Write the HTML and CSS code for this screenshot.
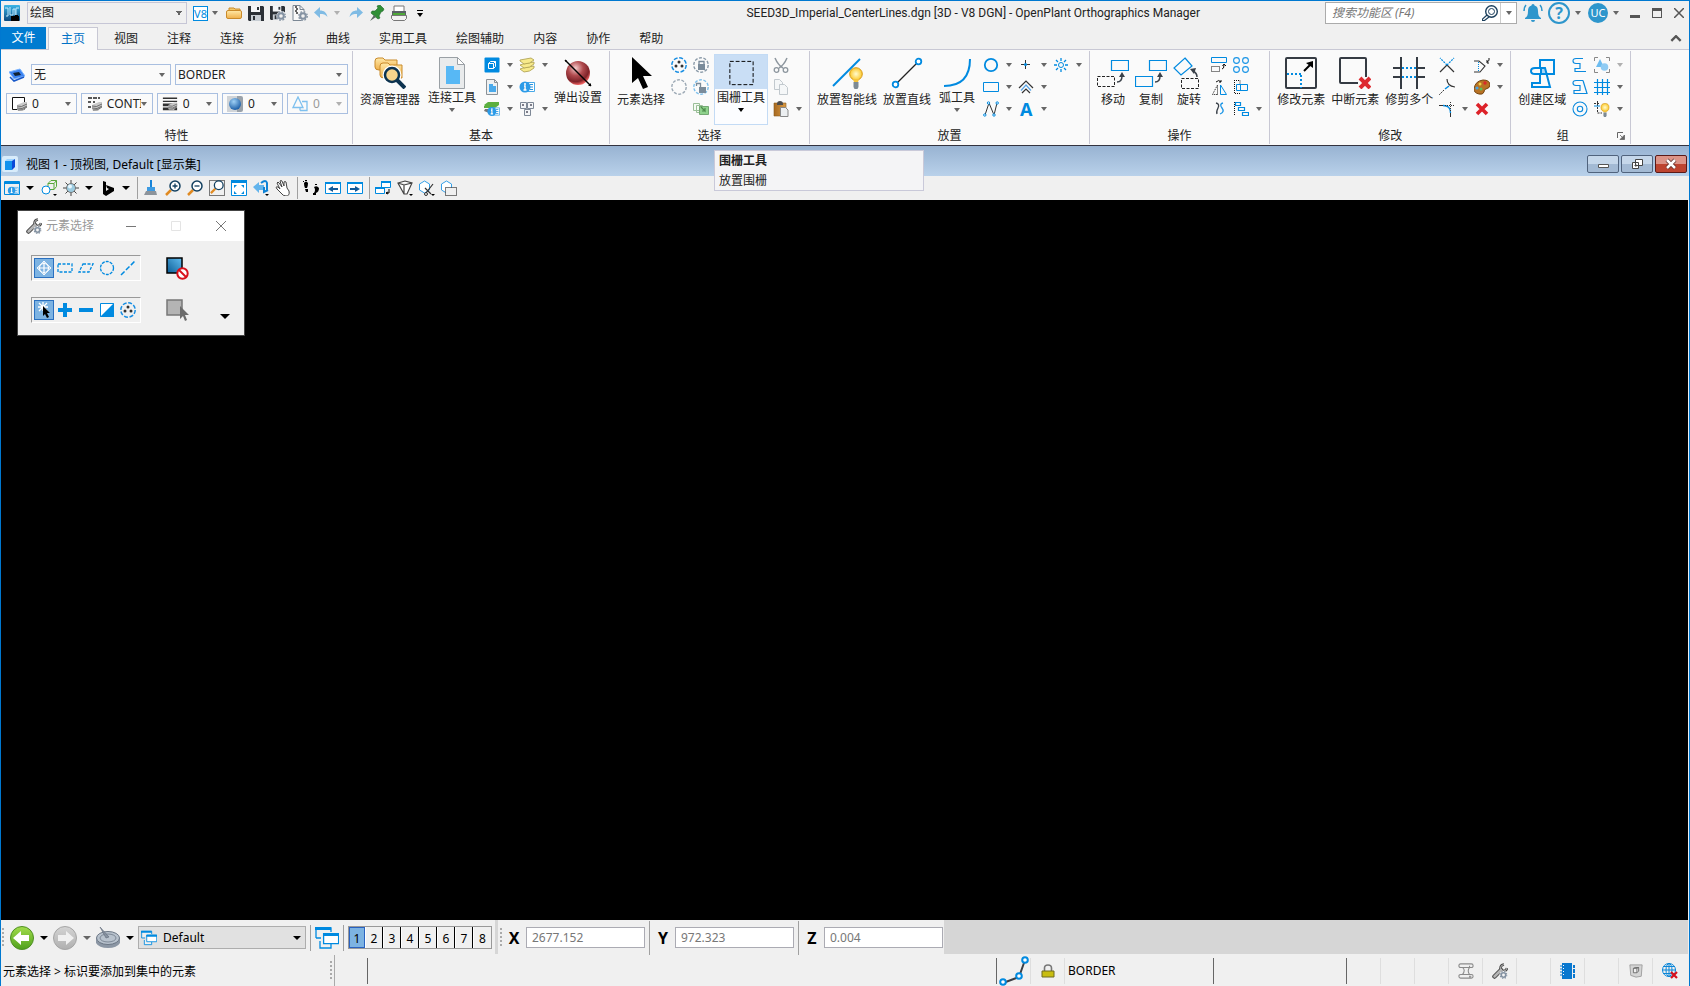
FILE: index.html
```html
<!DOCTYPE html>
<html lang="zh-CN">
<head>
    <meta charset="utf-8">
    <title>OpenPlant Orthographics Manager</title>
    <link rel="stylesheet" href="styles.css">
</head>
<body>
    <!-- icon sprite -->
    <svg class="sprite">
        <defs>
            <linearGradient id="gFolder" x1="0" y1="0" x2="0" y2="1"><stop offset="0" stop-color="#ffe9a8"/><stop offset="1" stop-color="#f0b04a"/></linearGradient>
            <linearGradient id="gGreen" x1="0" y1="0" x2="0" y2="1"><stop offset="0" stop-color="#a2dd4c"/><stop offset="1" stop-color="#4fa01c"/></linearGradient>
            <linearGradient id="gGrey" x1="0" y1="0" x2="0" y2="1"><stop offset="0" stop-color="#d4d4d4"/><stop offset="1" stop-color="#b0b0b0"/></linearGradient>
            <linearGradient id="gApp" x1="0" y1="0" x2="0" y2="1"><stop offset="0" stop-color="#3ab5e6"/><stop offset="1" stop-color="#0b4a80"/></linearGradient>
            <linearGradient id="gSquare" x1="0" y1="1" x2="1" y2="0"><stop offset="0" stop-color="#0a5c94"/><stop offset="1" stop-color="#62bdf0"/></linearGradient>
            <radialGradient id="gRed" cx=".4" cy=".3" r=".7"><stop offset="0" stop-color="#f6cccc"/><stop offset=".45" stop-color="#b04a4e"/><stop offset=".8" stop-color="#7e2329"/><stop offset="1" stop-color="#f06060"/></radialGradient>
            <radialGradient id="gBlue" cx=".4" cy=".3" r=".7"><stop offset="0" stop-color="#9fd0f5"/><stop offset="1" stop-color="#1d5fa8"/></radialGradient>
            <radialGradient id="gBulb"><stop offset="0" stop-color="#fffbd0"/><stop offset="1" stop-color="#fcc92c"/></radialGradient>
            <linearGradient id="gCopper" x1="0" y1="0" x2="1" y2="0"><stop offset="0" stop-color="#a86a20"/><stop offset="1" stop-color="#d99a45"/></linearGradient>
        </defs>
        <symbol id="app" viewBox="0 0 16 16"><rect width="16" height="16" rx="1" fill="url(#gApp)"/><path d="M1 3h3v8H2M6 2v8h3V4h2v6M12 10V3h3" fill="none" stroke="#bfeaff"/><rect x="7" y="11" width="8" height="5" fill="#000"/><path d="M11 10h3v2h-3z" fill="#000"/></symbol>
        <symbol id="folder" viewBox="0 0 16 16"><path d="M3 5V3h5l1 1h5v3" fill="#f4c869" stroke="#c98a2b"/><rect x=".5" y="5.500" width="15" height="8" rx="1.500" fill="url(#gFolder)" stroke="#c98a2b"/></symbol>
        <symbol id="save" viewBox="0 0 16 16"><path d="M0 1h15l1 1v14H1l-1-1z" fill="#2b3036"/><path d="M3 1h9v6H3z" fill="#f4f6f8"/><path d="M9 2h2v3H9z" fill="#2b3036"/><path d="M3 10h10v6H3z" fill="#c8ced4"/><path d="M5 11h2v4H5z" fill="#2b3036"/></symbol>
        <symbol id="gear" viewBox="0 0 10 10"><circle cx="5" cy="5" r="2.800" fill="none" stroke="#8492a2" stroke-width="2"/><circle cx="5" cy="5" r="4.300" fill="none" stroke="#8492a2" stroke-width="1.300" stroke-dasharray="1.700 1.700"/></symbol>
        <symbol id="savegear" viewBox="0 0 16 16"><use href="#save" width="15" height="15"/><circle cx="11.500" cy="11" r="5" fill="#f0f0f0"/><use href="#gear" x="6" y="6" width="10" height="10"/></symbol>
        <symbol id="pagegear" viewBox="0 0 16 16"><path d="M1 .5h7l4 4v11H1z" fill="#f8f8f8" stroke="#7b8794"/><path d="M8 .5v4h4" fill="none" stroke="#7b8794"/><path d="M4 1v2m1 0v2M4 5v2m1 0v2" stroke="#333" stroke-width="1.500"/><circle cx="11.500" cy="11" r="5" fill="#f0f0f0"/><use href="#gear" x="6" y="6" width="10" height="10"/></symbol>
        <symbol id="undo" viewBox="0 0 14 14"><path d="M0 6.500 6 1v3.500c4 0 6.500 2 7.500 6.500-2-2.500-4-3-7.500-3V12z" fill="#7fbbe4"/></symbol>
        <symbol id="redo" viewBox="0 0 14 14"><path d="M14 6.500 8 1v3.500C4 4.500 1.500 6.500.5 11c2-2.500 4-3 7.500-3V12z" fill="#7fbbe4"/></symbol>
        <symbol id="pin" viewBox="0 0 16 16"><path d="m8 1 3-1 4 4-1 2-2 1-2 4 1 2-2 1-7-6 1-2 3 0 3-3z" fill="#2f8f35" stroke="#1d6426" stroke-width=".6"/><path d="M5 10 1 16l6-4z" fill="#5a6a60"/></symbol>
        <symbol id="print" viewBox="0 0 16 16"><path d="M3 7V1h10v6" fill="#fff" stroke="#777"/><path d="M1 6h14v5H1z" fill="#596066"/><path d="M2 8h12v3H2z" fill="#4ea838"/><path d="M.5 10.500h15v3l-2 2h-11l-2-2z" fill="#f2f2f2" stroke="#777"/></symbol>
        <symbol id="searcher" viewBox="0 0 16 16"><g fill="none" stroke="#1c3f5c"><circle cx="9.500" cy="6.500" r="5.800" stroke-width="1.400"/><circle cx="9.500" cy="6.500" r="3"/><path d="m5 10-4.500 4v1.500h2L7 12" stroke-width="1.200"/></g></symbol>
        <symbol id="bell" viewBox="0 0 20 20"><path d="M10 1c1 0 1.500 1 1.500 1.500C14 3 15 5 15 8c0 4 1 6 3 7v1H2v-1c2-1 3-3 3-7 0-3 1-5 3.500-5.500C8.500 2 9 1 10 1zM8 17h4q0 2-2 2t-2-2z" fill="#2e96cc"/><path d="M3 2Q1 4 1 8M17 2q2 2 2 6" fill="none" stroke="#2e96cc" stroke-width="1.600"/></symbol>
        <symbol id="layer" viewBox="0 0 16 16"><path d="m0 5 11-3 5 7-11 3z" fill="#3b82f0" stroke="#7ab4ff"/><path d="m4 6 6-1 2 3-6 1z" fill="#123"/><path d="m1 10 4 4 10-4" fill="none" stroke="#1757c8" stroke-width="1.500"/></symbol>
        <symbol id="stackpg" viewBox="0 0 10 9"><path d="M0 3 7 0h3v5L6 9H1L0 7z" fill="#c9c9c9"/><path d="M0 4q4 2 10-2M0 6q5 2 10-2M1 8q4 1 9-3" fill="none" stroke="#555" stroke-width=".8"/></symbol>
        <symbol id="pcolor" viewBox="0 0 16 16"><path d="M1.500 1.500h12v12h-12z" fill="#fff" stroke="#111"/><use href="#stackpg" x="6" y="6" width="10" height="9"/></symbol>
        <symbol id="pstyle" viewBox="0 0 16 16"><path d="M2 2h12M2 6h3m2 0h2M2 11h3" stroke="#222" stroke-width="1.300" stroke-dasharray="4 1"/><use href="#stackpg" x="6" y="6" width="10" height="9"/></symbol>
        <symbol id="pweight" viewBox="0 0 18 16"><path d="M1 1.500h16M1 5h16" stroke="#333" stroke-width="1.500"/><path d="M1 9h16M1 13.500h16" stroke="#333" stroke-width="3"/><use href="#stackpg" x="7" y="6" width="10" height="9"/></symbol>
        <symbol id="pglobe" viewBox="0 0 16 16"><rect width="16" height="16" rx="2" fill="#9aa2aa"/><path d="M0 0h10v16H0z" fill="#d0d4d8"/><circle cx="8" cy="8" r="6" fill="url(#gBlue)"/></symbol>
        <symbol id="pprio" viewBox="0 0 16 16"><path d="M1 11.500 6 1l5 10.500zM8 14.500h7v-9h-5M8 14.500V12" fill="none" stroke="#7ec0ee" stroke-width="1.300"/></symbol>

        <symbol id="explorer" viewBox="0 0 32 32"><g fill="url(#gFolder)" stroke="#c98a2b"><path d="M1 4q0-3 3-3h5l2 2h12v10H5Q1 13 1 10z"/><path d="M6 9q0-3 3-3h5l2 2h12v13H10q-4 0-4-3z"/></g><circle cx="18" cy="18" r="7" fill="#f9d98c" stroke="#fff" stroke-width="5"/><circle cx="18" cy="18" r="7" fill="#f9d48c" stroke="#0d3350" stroke-width="2.500"/><path d="m23 23 8 8" stroke="#0d3350" stroke-width="4"/></symbol>
        <symbol id="doc" viewBox="0 0 32 32"><path d="M3.500.5h18l7 7v24h-25z" fill="#e9ebec" stroke="#9aa0a5"/><path d="M21.500.5v7h7z" fill="#fff" stroke="#9aa0a5"/><path d="M10 9h8v4h6v14H10z" fill="#57b8f5"/></symbol>
        <symbol id="docsmall" viewBox="0 0 16 16"><path d="M2.500.5h8l3 3v12h-11z" fill="#eef0f1" stroke="#8a9197"/><path d="M10.500.5v3h3" fill="none" stroke="#8a9197"/><path d="M5 5h4v2h3v6H5z" fill="#4aa9ea"/></symbol>
        <symbol id="ball" viewBox="0 0 32 32"><circle cx="16" cy="16" r="12" fill="url(#gRed)"/><path d="m3 3 26 26" stroke="#000" stroke-width="1.400"/><path d="m3 3 2 0-2 2zM29 29h-3l3-3z"/></symbol>
        <symbol id="cubebox" viewBox="0 0 16 16"><rect x=".5" y=".5" width="15" height="15" rx="1" fill="#008ae0"/><path d="M4.500 6.500h5v5h-5zM4.500 6.500l2-2h5v5l-2 2M9.500 6.500l2-2" fill="none" stroke="#fff"/></symbol>
        <symbol id="info" viewBox="0 0 16 16"><path d="M7 3.500h8.500v9H7" fill="#fff" stroke="#49a9e8"/><path d="M11 5.500h3M11 8h3M11 10.500h3" stroke="#2a93dd"/><circle cx="6" cy="8" r="5.500" fill="#2b9be8"/><path d="M6 4v2m-1 1h1v4m-1.500 0h3" stroke="#fff" stroke-width="1.500"/></symbol>
        <symbol id="landinfo" viewBox="0 0 16 16"><path d="m0 4 4-3h11l-4 4H1zM0 7v-2h11l4-4v3l-4 3z" fill="#5caf3f"/><path d="m0 10 1-2h4v4z" fill="#777"/><use href="#info" x="3" y="4" width="13" height="13"/></symbol>
        <symbol id="layers" viewBox="0 0 16 16"><g fill="#f7ea8b" stroke="#a99c4c" stroke-width=".8"><path d="m1 12 4 3q6 0 10-4V9L4 11z"/><path d="m1 8 4 3q6 0 10-4V5L4 7z"/><path d="m1 4 4 3q6 0 10-4l-3-2-11 2z"/></g></symbol>
        <symbol id="keys" viewBox="0 0 16 16"><g fill="#f4f5f7" stroke="#7e8896"><path d="M1.500 1.500h6v6h-6zM8.500 1.500h6v6h-6zM5.500 8.500h6v6h-6z"/></g><path d="M3 4h2m6 0h2m-6 7h2" stroke="#556" stroke-width="1.500"/></symbol>

        <symbol id="cursor" viewBox="0 0 32 32"><path d="M7 0v26l6-5 5 11 5-2-5-11h9z"/></symbol>
        <symbol id="dots" viewBox="0 0 16 16"><circle cx="8" cy="8" r="7.200" fill="none" stroke="#1a8fe3" stroke-width="1.500" stroke-dasharray="4 1.650"/><circle cx="8" cy="5" r="1.500" fill="#333"/><circle cx="5" cy="9" r="1.500" fill="#333"/><circle cx="11" cy="9" r="1.500" fill="#333"/></symbol>
        <symbol id="dotcircle" viewBox="0 0 16 16"><circle cx="8" cy="8" r="7.200" fill="none" stroke="#9ba8b4" stroke-width="1.400" stroke-dasharray="3 1.520"/></symbol>
        <symbol id="locksel" viewBox="0 0 16 16"><circle cx="8" cy="8" r="7.200" fill="none" stroke="#8a9aa8" stroke-width="1.400" stroke-dasharray="3 1.520"/><path d="M5 7h7v6H5z" fill="#7a8b9a"/><path d="M6 7V4.500h5V7" fill="none" stroke="#7a8b9a" stroke-width="1.300"/></symbol>
        <symbol id="unlocksel" viewBox="0 0 16 16"><circle cx="8" cy="8" r="7.200" fill="none" stroke="#7fc0ec" stroke-width="1.400" stroke-dasharray="3 1.520"/><path d="M6 8h7v6H6z" fill="#7a8b9a"/><path d="M3.500 7V4.500h4V8" fill="none" stroke="#7a8b9a" stroke-width="1.300"/></symbol>
        <symbol id="sheets" viewBox="0 0 16 16"><path d="M.5 2.500h6v7h-6zM3.500 4.500h6v7h-6z" fill="#f4faf2" stroke="#9bbf98"/><path d="M6.500 5.500h9v8h-9z" fill="#8fd28c" stroke="#74a873"/><path d="m8 6 4 4V7m0 3H9" fill="none" stroke="#4d8a4b" stroke-width="1.200"/></symbol>
        <symbol id="fence" viewBox="0 0 32 32"><path d="M4.500 3.500h24v24h-24z" fill="none" stroke="#000" stroke-dasharray="4 2"/></symbol>
        <symbol id="cut" viewBox="0 0 16 16"><path d="M2 1q3 7 8 10M14 1q-3 7-8 10" fill="none" stroke="#8d969e" stroke-width="1.500"/><circle cx="3.500" cy="13" r="2.300" fill="none" stroke="#8d969e" stroke-width="1.300"/><circle cx="12.500" cy="13" r="2.300" fill="none" stroke="#8d969e" stroke-width="1.300"/></symbol>
        <symbol id="copypg" viewBox="0 0 16 16"><g fill="#f5f7f8" stroke="#c2c9ce"><path d="M1.500.5h5l3 3v7h-8z"/><path d="M6.500 5.500h5l3 3v7h-8z"/></g></symbol>
        <symbol id="paste" viewBox="0 0 16 16"><path d="M1 2h12v13H1z" fill="url(#gCopper)" stroke="#8a5a1c" stroke-width=".6"/><path d="M4 3q0-3 3-3t3 3v1H4z" fill="#4c4c4c"/><path d="M7.500 6.500h5l2.500 2.500v6.500H7.500z" fill="#eceff1" stroke="#888"/></symbol>

        <symbol id="bulb" viewBox="0 0 14 22"><circle cx="7" cy="7" r="6.300" fill="url(#gBulb)" stroke="#d79b1c"/><path d="M4 12h6l-1 3H5z" fill="#f5c33c"/><path d="M4.500 15h5v5l-1 2h-3l-1-2z" fill="#7d8a94"/></symbol>
        <symbol id="smartline" viewBox="0 0 32 32"><path d="M2 29 29 2" stroke="#008ae0" stroke-width="2"/><use href="#bulb" x="18" y="10" width="14" height="22"/></symbol>
        <symbol id="line" viewBox="0 0 32 32"><path d="M5 27 27 5" stroke="#222" stroke-width="1.200"/><circle cx="4.500" cy="27.500" r="2.800" fill="#fff" stroke="#008ae0" stroke-width="1.800"/><circle cx="27.500" cy="4.500" r="2.800" fill="#fff" stroke="#008ae0" stroke-width="1.800"/></symbol>
        <symbol id="arc" viewBox="0 0 32 32"><path d="M29 2q0 27-26 27" fill="none" stroke="#008ae0" stroke-width="2"/></symbol>
        <symbol id="circle" viewBox="0 0 16 16"><circle cx="8" cy="8" r="6.200" fill="none" stroke="#008ae0" stroke-width="1.800"/></symbol>
        <symbol id="rect" viewBox="0 0 16 16"><path d="M.5 3.500h15v9H.5z" fill="none" stroke="#008ae0"/></symbol>
        <symbol id="poly" viewBox="0 0 16 16"><path d="m2 14 4-12 5 12 3-12" fill="none" stroke="#333"/><g fill="#fff" stroke="#008ae0"><circle cx="1.800" cy="14" r="1.200"/><circle cx="5.500" cy="2" r="1.200"/><circle cx="11" cy="14" r="1.200"/><circle cx="14.200" cy="2" r="1.200"/></g></symbol>
        <symbol id="point" viewBox="0 0 16 16"><path d="M7.500 3v9M3 7.500h9" stroke="#333"/><circle cx="7.500" cy="7.500" r="1.500" fill="#008ae0"/></symbol>
        <symbol id="roof" viewBox="0 0 16 16"><path d="m1 9 7-7 7 7M4 14l4-4 4 4" fill="none" stroke="#333" stroke-width="1.200"/><path d="m3 11.500 5-5.500 5 5.500" fill="none" stroke="#5aa5e6" stroke-width="1.200"/></symbol>
        <symbol id="star" viewBox="0 0 16 16"><circle cx="8" cy="8" r="2.500" fill="none" stroke="#008ae0"/><path d="M8 1v3m0 8v3M1 8h3m8 0h3M3 3l2 2m6 6 2 2M3 13l2-2m6-6 2-2" stroke="#008ae0" stroke-width="1.300"/></symbol>

        <symbol id="move" viewBox="0 0 32 32"><path d="M14.500 3.500h17v10h-17z" fill="none" stroke="#008ae0" stroke-width="1.200"/><path d="M.5 19.500h17v10H.5z" fill="none" stroke="#222" stroke-dasharray="3 1.500"/><path d="M20 25q5 0 5-6" fill="none" stroke="#3a4149" stroke-width="1.500"/><path d="m25 15 3 5h-6z" fill="#3a4149"/></symbol>
        <symbol id="copy" viewBox="0 0 32 32"><path d="M14.500 3.500h17v10h-17zM.5 19.500h17v10H.5z" fill="none" stroke="#008ae0" stroke-width="1.200"/><path d="M20 25q5 0 5-6" fill="none" stroke="#3a4149" stroke-width="1.500"/><path d="m25 15 3 5h-6z" fill="#3a4149"/></symbol>
        <symbol id="rotate" viewBox="0 0 32 32"><path d="M12 1 19 9 8 18 1 11z" fill="none" stroke="#008ae0" stroke-width="1.200"/><path d="M8.500 21.500h17v10h-17z" fill="none" stroke="#222" stroke-dasharray="3 1.500"/><path d="M24 20q0-4-4-6" fill="none" stroke="#3a4149" stroke-width="1.500"/><path d="m17 12 6-1-2 6z" fill="#3a4149"/></symbol>
        <symbol id="stretch" viewBox="0 0 16 16"><path d="M.5.5h15v5H.5z" fill="none" stroke="#008ae0"/><path d="M.5 9.500h8v5h-8z" fill="none" stroke="#111" stroke-dasharray="1 1"/><path d="M11 12q2 0 2-4m-1.500 1L13 7l2 2" fill="none" stroke="#111"/></symbol>
        <symbol id="array" viewBox="0 0 16 16"><g fill="none" stroke="#1a95e6" stroke-width="1.100"><circle cx="3.500" cy="3.500" r="2.900"/><circle cx="12.500" cy="3.500" r="2.900"/><circle cx="3.500" cy="12.500" r="2.900"/><circle cx="12.500" cy="12.500" r="2.900"/></g></symbol>
        <symbol id="mirror" viewBox="0 0 16 16"><path d="M6.500 15.500V6l-5 9.500z" fill="none" stroke="#111" stroke-dasharray="1 1"/><path d="M9.500 15.500V6l6 9.500z" fill="none" stroke="#008ae0"/><path d="M5 3q3-3 5 0m0-2v2H8" fill="none" stroke="#111"/></symbol>
        <symbol id="offset" viewBox="0 0 16 16"><path d="M1.500 1v14M1 1.500h6v3M7 14.500H1" fill="none" stroke="#111" stroke-dasharray="1 1"/><path d="M3.500 5.500h11v6h-11z" fill="none" stroke="#008ae0"/><path d="M7.500 5v7" stroke="#008ae0"/></symbol>
        <symbol id="curves" viewBox="0 0 16 16"><path d="M5 2q4 1 2 5t-1 6" fill="none" stroke="#3a4149" stroke-width="1.300"/><path d="M12 2q-4 1-1 5t-2 6" fill="none" stroke="#1a95e6" stroke-width="1.300"/></symbol>
        <symbol id="align" viewBox="0 0 16 16"><path d="M1.500 1v14" stroke="#111" stroke-dasharray="1 1"/><path d="M2.500 1.500h5v3h-5zM5.500 6.500h6v3h-6zM9.500 11.500h6v3h-6z" fill="none" stroke="#008ae0" stroke-width="1.200"/></symbol>

        <symbol id="modify" viewBox="0 0 32 32"><rect x="1" y="1" width="30" height="30" rx="1" fill="none" stroke="#353b43" stroke-width="2"/><path d="M2 17h14M16 18v13" stroke="#008ae0" stroke-width="2" stroke-dasharray="2 2"/><path d="m19 14 6-6" stroke="#000" stroke-width="2"/><path d="M28 4v7l-7-5z"/></symbol>
        <symbol id="break" viewBox="0 0 32 32"><path d="M27 20V2q0-1-1-1H2Q1 1 1 2v23q0 1 1 1h17" fill="none" stroke="#353b43" stroke-width="2"/><path d="m21 21 10 10m0-10L21 31" stroke="#dd2b31" stroke-width="4"/></symbol>
        <symbol id="trim" viewBox="0 0 32 32"><path d="M8 0v32M24 0v32M0 11h8m16 0h8M0 20h8m16 0h8" stroke="#353b43" stroke-width="2"/><path d="M9 11h14M9 20h14" stroke="#008ae0" stroke-width="2" stroke-dasharray="2 2"/></symbol>
        <symbol id="xcut" viewBox="0 0 16 16"><path d="m8 8 7 7M8 8l-7 7" stroke="#333" stroke-width="1.200"/><path d="M8 8 1 1m7 7 7-7" stroke="#008ae0" stroke-width="1.200" stroke-dasharray="2 1"/></symbol>
        <symbol id="extend" viewBox="0 0 16 16"><path d="M8 0q0 7 8 8" fill="none" stroke="#333" stroke-width="1.200"/><path d="m10 7-4 3" stroke="#008ae0" stroke-width="1.500"/><path d="m5 11-5 5" stroke="#333" stroke-dasharray="2 1"/></symbol>
        <symbol id="fillet" viewBox="0 0 16 16"><path d="M0 4.500h4M11.500 12v4" stroke="#333"/><path d="M4 4.500q7.500 0 7.500 7.500" fill="none" stroke="#008ae0" stroke-width="1.400"/><path d="M6 4.500h10M11.500 1v9" stroke="#333" stroke-dasharray="1 1"/></symbol>
        <symbol id="arcmod" viewBox="0 0 16 16"><path d="M0 4h5l6 5-5 6H0" fill="none" stroke="#333" stroke-width="1.100"/><path d="M4.500 5v9" stroke="#008ae0" stroke-dasharray="1 1"/><path d="M13 5q3-1 2-4m-2 2 0 3 2 0" fill="none" stroke="#111"/></symbol>
        <symbol id="palette" viewBox="0 0 16 16"><path d="M9 1q7 0 7 5 0 3-4 4-2 0-2 3-1 3-5 2-5-1-5-5 1-8 9-9z" fill="#b87224" stroke="#754510"/><circle cx="11" cy="4" r="1.700" fill="#d92a2a"/><circle cx="6" cy="5" r="1.500" fill="#efcf43"/><circle cx="3" cy="9" r="1.600" fill="#48a5e4"/><circle cx="7" cy="10" r="1.500" fill="#5ec05a"/></symbol>
        <symbol id="redx" viewBox="0 0 16 16"><path d="m3 3 10 10m0-10L3 13" stroke="#dd2229" stroke-width="3.600"/></symbol>
        <symbol id="region" viewBox="0 0 32 32"><path d="M14 11h4l4 6h-7z" fill="#a8d5f4"/><path d="M14 10V3h14v14H15V11M18 11H9q-4 0-4 3t4 3h5v9H6v4h18l-5-19z" fill="none" stroke="#008ae0" stroke-width="2"/></symbol>
        <symbol id="shape1" viewBox="0 0 16 16"><path d="M11 1.500H4q-3 0-3 2.500t3 2.500h4v5H3v3h11" fill="none" stroke="#0b8ade" stroke-width="1.200"/></symbol>
        <symbol id="shape2" viewBox="0 0 16 16"><path d="M11 1.500H4q-3 0-3 2.500t3 2.500h4v5H2v3h13l-4-13" fill="none" stroke="#0b8ade" stroke-width="1.200"/></symbol>
        <symbol id="ring" viewBox="0 0 16 16"><g fill="none" stroke="#0b8ade" stroke-width="1.100"><circle cx="8" cy="8" r="7"/><circle cx="8" cy="8" r="2.700"/></g></symbol>
        <symbol id="group" viewBox="0 0 16 16"><path d="M.5 4V.5H4m8 0h3.500V4m0 8v3.500H12m-8 0H.5V12" fill="none" stroke="#888"/><path d="m6 2 4 8H2z" fill="#6cbcf0"/><circle cx="10.500" cy="10" r="3.800" fill="#8fcbf3"/></symbol>
        <symbol id="grid" viewBox="0 0 16 16"><path d="M3.500 0v16M8.500 0v16M13.500 0v16M0 3.500h16M0 8.500h16M0 13.500h16" stroke="#008ae0" stroke-width="1.200"/></symbol>
        <symbol id="gbulb" viewBox="0 0 16 16"><path d="M0 2.500h5M3.500 0v12H8" fill="none" stroke="#333" stroke-dasharray="2 1"/><path d="M0 5h6" stroke="#008ae0"/><use href="#bulb" x="6" y="2" width="10" height="14"/></symbol>

        <symbol id="vcube" viewBox="0 0 16 16"><rect width="16" height="16" rx="2" fill="#d8ecfb"/><path d="m3 5 2-2h8l-2 2z" fill="#9ed4ff"/><path d="M3 5h7v9H3z" fill="#1292ee"/><path d="m10 5 3-2v8l-3 3z" fill="#0b49d8"/></symbol>
        <symbol id="vinfo" viewBox="0 0 16 16"><path d="M1 2h14v2H1z" fill="#008ae0"/><path d="M.5 1.500h15v13H.5z" fill="none" stroke="#008ae0"/><use href="#info" x="3" y="5" width="12" height="11"/></symbol>
        <symbol id="vstyle" viewBox="0 0 16 16"><path d="M7 3.500h6v6H7zM7 3.500l3-3h5.500v6l-2.500 3M13 3.500l2.500-3" fill="none" stroke="#58a83a"/><circle cx="5" cy="10" r="4" fill="#fff" stroke="#008ae0"/><path d="M12 14h4l-2 2z"/></symbol>
        <symbol id="sun" viewBox="0 0 16 16"><path d="M8 0v16M0 8h16M2.500 2.500l11 11m0-11-11 11" stroke="#444"/><circle cx="8" cy="8" r="4.500" fill="#9ccbe0" stroke="#777"/><circle cx="7" cy="6.500" r="2" fill="#e8f8ff"/></symbol>
        <symbol id="bing" viewBox="0 0 16 16"><path d="m3 1 3 1v9l3-2-2-1-1-3 8 3v3l-8 5-3-2z"/></symbol>
        <symbol id="brush" viewBox="0 0 16 16"><path d="M7 0h2v7H7z" fill="#1683d8"/><path d="M4 7h8v4H4z" fill="#3e9be2"/><path d="M3 11h10l1 4H1z" fill="#8d949b"/></symbol>
        <symbol id="lens" viewBox="0 0 16 16"><path d="m6 10-5 5" stroke="#e08a22" stroke-width="2.500"/><circle cx="10" cy="6" r="5" fill="#fff" stroke="#134060" stroke-width="1.500"/></symbol>
        <symbol id="zin" viewBox="0 0 16 16"><use href="#lens"/><path d="M7.500 6h5M10 3.500v5" stroke="#134060" stroke-width="1.300"/></symbol>
        <symbol id="zout" viewBox="0 0 16 16"><use href="#lens"/><path d="M7.500 6h5" stroke="#134060" stroke-width="1.300"/></symbol>
        <symbol id="zwin" viewBox="0 0 16 16"><path d="M.5.5h15v15H.5z" fill="none" stroke="#000" stroke-dasharray="1 1"/><use href="#lens" x="1" y="0" width="14" height="14"/></symbol>
        <symbol id="fit" viewBox="0 0 16 16"><path d="M.5.500h15v15H.5z" fill="#fff" stroke="#008ae0"/><path d="M0 0h16v3H0zM3 5h3L3 8zm10 0h-3l3 3zM3 14h3l-3-3zm10 0h-3l3-3z" fill="#008ae0"/></symbol>
        <symbol id="vrot" viewBox="0 0 16 16"><path d="M0 7 6 2v3h5v5H6v3z" fill="#62b4ec"/><path d="M8 3q5-4 6 0v7m-3-3v5l4-2" fill="none" stroke="#0f83d6" stroke-width="2"/><path d="M12 14h4l-2 2z"/></symbol>
        <symbol id="hand" viewBox="0 0 16 16"><path d="M6 13 2 9Q0 6 3 7l2 2-3-6q1-2 2 0l3 4-2-6q1-1 2 0l2 5 0-4q1-1 2 0l1 6 2 3q1 5-3 5-3 0-5-3z" fill="#fff" stroke="#444"/></symbol>
        <symbol id="feet" viewBox="0 0 16 16"><path d="M1 3q2-3 4 0 0 3-1 5H2Q1 6 1 3zM2 9h3v3H3zM11 7q3-2 5 1 0 4-3 5h-2q2-3 0-6zM10 13h3v2h-3z"/><path d="M0 1h1v1H0zm2-1h2v1H2zM12 4h2v1h-2z"/></symbol>
        <symbol id="vprev" viewBox="0 0 16 16"><path d="M.5 2.500h15v11H.5z" fill="#fff" stroke="#008ae0"/><path d="M0 2h16v2H0z" fill="#008ae0"/><path d="M6 9h7" stroke="#135a98" stroke-width="2"/><path d="m3 9 5-3v6z" fill="#135a98"/></symbol>
        <symbol id="vnext" viewBox="0 0 16 16"><path d="M.5 2.500h15v11H.5z" fill="#fff" stroke="#008ae0"/><path d="M0 2h16v2H0z" fill="#008ae0"/><path d="M3 9h7" stroke="#135a98" stroke-width="2"/><path d="m13 9-5-3v6z" fill="#135a98"/></symbol>
        <symbol id="vcopy" viewBox="0 0 16 16"><path d="M6.500 1.500h9v6h-9zM.5 7.500h9v6h-9z" fill="#fff" stroke="#008ae0"/><path d="M6 1h10v2H6zM0 7h10v2H0z" fill="#008ae0"/><path d="M11 13h3V9m-3 4 2-1m-2 1 2 1" fill="none" stroke="#000"/></symbol>
        <symbol id="vpersp" viewBox="0 0 16 16"><path d="m1 3 7-2 7 2-5 11H7zM1 3l6 2 8-2M7 5v9" fill="#fff" stroke="#444" stroke-width="1.200"/><path d="M12 14h4l-2 2z"/></symbol>
        <symbol id="vclip" viewBox="0 0 16 16"><path d="m.5 4 5-3 5 3v6l-5 3-5-3z" fill="#fff" stroke="#35a0e8"/><path d="m6 8 6 6m2-10L7 13" stroke="#333" stroke-width="1.200"/><circle cx="7" cy="14" r="1.500" fill="none" stroke="#333"/><path d="M12 14h4l-2 2z"/></symbol>
        <symbol id="vmask" viewBox="0 0 16 16"><path d="m.5 4 5-3 5 3v6l-5 3-5-3z" fill="#fff" stroke="#35a0e8"/><path d="M4.500 7.500h11v8h-11z" fill="#f0f0f0" stroke="#000" stroke-dasharray="1 1"/></symbol>

        <symbol id="wrench" viewBox="0 0 16 16"><g fill="none" stroke="#444"><path d="M2.500 13.500 9 7" stroke-width="4.500" stroke-linecap="round"/><path d="M12 1.500Q8.500 2 8.500 5t3 3q3 0 3.500-3" stroke-width="2.500"/></g><g fill="none" stroke="#b5b5b5"><path d="M2.500 13.500 9 7" stroke-width="2.500" stroke-linecap="round"/><path d="M12 1.500Q8.500 2 8.500 5t3 3q3 0 3.500-3"/></g><circle cx="11.500" cy="12" r="4" fill="#f4f4f4"/><use href="#gear" x="7.500" y="8" width="8" height="8"/></symbol>
        <symbol id="seltarget" viewBox="0 0 16 16"><circle cx="8" cy="8" r="4.500" fill="none" stroke="#fff" stroke-width="1.200"/><path d="M8 1v14M1 8h14" stroke="#fff" stroke-width="1.200"/><path d="m8 1 7 7-7 7-7-7z" fill="none" stroke="#fff" stroke-width=".8"/></symbol>
        <symbol id="drect" viewBox="0 0 16 16"><path d="M1 4h14v8H1z" fill="none" stroke="#008ae0" stroke-width="1.300" stroke-dasharray="3 1.500"/></symbol>
        <symbol id="dpar" viewBox="0 0 16 16"><path d="M5 4h10l-4 8H1z" fill="none" stroke="#008ae0" stroke-width="1.300" stroke-dasharray="3 1.500"/></symbol>
        <symbol id="dcirc" viewBox="0 0 16 16"><circle cx="8" cy="8" r="6.500" fill="none" stroke="#008ae0" stroke-width="1.300" stroke-dasharray="3 1.080"/></symbol>
        <symbol id="dline" viewBox="0 0 16 16"><path d="M1 15 15 1" stroke="#008ae0" stroke-width="1.500" stroke-dasharray="5 2"/></symbol>
        <symbol id="newsel" viewBox="0 0 16 16"><path d="M7 0v9M2 5h10M3 1l8 8m0-8L3 9" stroke="#fff" stroke-width="1.300"/><path d="M7 4v10l2-2 2 4 2-1-2-4h3z"/></symbol>
        <symbol id="plus" viewBox="0 0 16 16"><path d="M8 1v14M1 8h14" stroke="#008ae0" stroke-width="4"/></symbol>
        <symbol id="minus" viewBox="0 0 16 16"><path d="M1 8h14" stroke="#008ae0" stroke-width="4"/></symbol>
        <symbol id="invert" viewBox="0 0 16 16"><path d="M1.500 1.500h13v13h-13z" fill="#fff" stroke="#008ae0"/><path d="M15 1v14H1z" fill="#008ae0"/></symbol>
        <symbol id="deselect" viewBox="0 0 24 24"><path d="M2 2h15v15H2z" fill="url(#gSquare)" stroke="#000" stroke-width="1.500"/><circle cx="17.500" cy="17.500" r="5.200" fill="#fff" stroke="#d8101c" stroke-width="2"/><path d="m14 14 7 7" stroke="#d8101c" stroke-width="2"/></symbol>
        <symbol id="selall" viewBox="0 0 24 24"><path d="M2 2h15v15H2z" fill="#b4b4b4" stroke="#777" stroke-width="1.500"/><path d="M15 8v13l3-3 2 5 2-1-2-5h4z" fill="#6c6c6c"/></symbol>

        <symbol id="back" viewBox="0 0 24 24"><circle cx="12" cy="12" r="11.500" fill="url(#gGreen)" stroke="#4f8f25"/><path d="m3 12 8-7v4h8v6h-8v4z" fill="#fff"/></symbol>
        <symbol id="fwd" viewBox="0 0 24 24"><circle cx="12" cy="12" r="11.500" fill="url(#gGrey)" stroke="#a5a5a5"/><path d="m21 12-8-7v4H5v6h8v4z" fill="#f0f0f0"/></symbol>
        <symbol id="compass" viewBox="0 0 24 24"><path d="M0 12v5q3 5 12 5t12-5v-5z" fill="#8b96a4"/><ellipse cx="12" cy="12" rx="11.500" ry="6.500" fill="#b8c2cd" stroke="#6c7785"/><ellipse cx="12" cy="12" rx="8" ry="4" fill="none" stroke="#7d8896"/><path d="m4 1 9 10-3 1z" fill="#8792a0" stroke="#5f6a78" stroke-width=".6"/></symbol>
        <symbol id="views" viewBox="0 0 24 22"><g fill="#f0f0f0" stroke="#008ae0" stroke-width="1.300"><path d="M5 14v7h11v-4M1 11V1h15v4M1 11h5"/><path d="M8.600 6.600h15v10h-15z" fill="#fff"/></g><path d="M0 0h16v3H0zM8 6h16v3H8z" fill="#008ae0"/></symbol>
        <symbol id="snap" viewBox="0 0 30 30"><path d="m4 27 16-6 6-17" fill="none" stroke="#3b3f45" stroke-width="2"/><g fill="#fff" stroke="#008ae0" stroke-width="2"><circle cx="4" cy="26" r="2.800"/><circle cx="20" cy="20" r="2.800"/><circle cx="26" cy="4" r="2.800"/></g></symbol>
        <symbol id="lock" viewBox="0 0 14 14"><path d="M3.500 7V4q0-3 3.500-3t3.500 3v3" fill="none" stroke="#777" stroke-width="1.600"/><path d="M1 7h12v6H1z" fill="#c8bd10" stroke="#6f6a20"/></symbol>
        <symbol id="scroll" viewBox="0 0 18 18"><g fill="none" stroke="#8a8a8a" stroke-width="1.200"><path d="M3 1h12q2 0 2 2t-2 2h-2M3 1Q1 1 1 3t2 2h10V3M5 5q4 3 0 8H3q-2 0-2 2t2 2h12M13 5q-3 4 0 8h2q2 0 2 2t-2 2-2-2h2M5 13h8"/></g></symbol>
        <symbol id="notebook" viewBox="0 0 16 16"><path d="M2 0h10v16H2z" fill="#0a78cf"/><path d="M0 3h4M0 6h4M0 9h4M0 12h4" stroke="#0a78cf"/><path d="M3 2h1v1H3zM3 5h1v1H3zM3 8h1v1H3zM3 11h1v1H3z" fill="#fff"/><path d="M13 2h2v3h-2zM13 6h2v4h-2zM13 11h2v4h-2z" fill="#0a78cf"/></symbol>
        <symbol id="shield" viewBox="0 0 16 16"><path d="M1 1h14l-1 13-6 1-6-2z" fill="#d5d5d5" stroke="#999"/><path d="M5 5h4v5H5zM5 5l2-1h4v4l-2 2M9 5l2-1" fill="#eee" stroke="#666"/></symbol>
        <symbol id="globe" viewBox="0 0 16 16"><g fill="none" stroke="#0a86d8"><circle cx="7" cy="7" r="6.500"/><ellipse cx="7" cy="7" rx="3" ry="6.500"/><path d="M7 0v14M0 7h14M1 3.500h12M1 10.500h12"/></g><path d="m9 9 6 6m0-6-6 6" stroke="#d8101c" stroke-width="2.200"/></symbol>
    </svg>

    <div class="window">
        <header class="titlebar">
            <svg class="i16"><use href="#app"/></svg>
            <select class="workflow" aria-label="工作流"><option>绘图</option></select>
            <div class="quick">
                <button class="v8" title="V8">V8</button><i class="tri"></i>
                <button title="打开"><svg class="i16"><use href="#folder"/></svg></button>
                <button title="保存"><svg class="i16"><use href="#save"/></svg></button>
                <button title="保存设置"><svg class="i16"><use href="#savegear"/></svg></button>
                <button title="压缩"><svg class="i16"><use href="#pagegear"/></svg></button>
                <button title="撤消"><svg class="i14"><use href="#undo"/></svg></button><i class="tri dim"></i>
                <button title="重做"><svg class="i14"><use href="#redo"/></svg></button>
                <button title="固定"><svg class="i16"><use href="#pin"/></svg></button>
                <button title="打印"><svg class="i16"><use href="#print"/></svg></button>
                <button class="custom" title="自定义"><i class="tri black"></i></button>
            </div>
            <h1 class="caption">SEED3D_Imperial_CenterLines.dgn [3D - V8 DGN] - OpenPlant Orthographics Manager</h1>
            <div class="search">
                <input type="text" placeholder="搜索功能区 (F4)" aria-label="搜索功能区">
                <svg class="i16"><use href="#searcher"/></svg>
                <button title="搜索选项"><i class="tri"></i></button>
            </div>
            <div class="account">
                <button title="通知"><svg class="i20"><use href="#bell"/></svg></button>
                <button class="help" title="帮助">?</button><i class="tri"></i>
                <button class="user" title="用户">UC</button><i class="tri"></i>
            </div>
            <div class="winctl">
                <button class="min" title="最小化"></button>
                <button class="max" title="最大化"></button>
                <button title="关闭"><svg class="i10" viewBox="0 0 10 10"><path d="m0 0 10 10M10 0 0 10" stroke="#555" stroke-width="1.500"/></svg></button>
            </div>
        </header>

        <nav class="tabs">
            <button class="file">文件</button>
            <button class="tab active">主页</button>
            <button class="tab">视图</button>
            <button class="tab">注释</button>
            <button class="tab">连接</button>
            <button class="tab">分析</button>
            <button class="tab">曲线</button>
            <button class="tab">实用工具</button>
            <button class="tab">绘图辅助</button>
            <button class="tab">内容</button>
            <button class="tab">协作</button>
            <button class="tab">帮助</button>
            <button class="collapse" title="折叠功能区"><svg viewBox="0 0 10 6"><path d="m1 5 4-4 4 4" fill="none" stroke="#555" stroke-width="2"/></svg></button>
        </nav>

        <div class="ribbon">
            <section class="group attrs">
                <div class="body">
                    <div class="row">
                        <svg class="i16"><use href="#layer"/></svg>
                        <div class="combo template"><select aria-label="模板"><option>无</option></select><i class="tri"></i></div>
                        <div class="combo level"><select aria-label="图层"><option>BORDER</option></select><i class="tri"></i></div>
                    </div>
                    <div class="row">
                        <div class="combo wide"><svg class="i16"><use href="#pcolor"/></svg><select aria-label="颜色"><option>0</option></select><i class="tri"></i></div>
                        <div class="combo wide"><svg class="i16"><use href="#pstyle"/></svg><select aria-label="线型"><option>CONTINUOUS</option></select><i class="tri"></i></div>
                        <div class="combo"><svg class="i16"><use href="#pweight"/></svg><select aria-label="线宽"><option>0</option></select><i class="tri"></i></div>
                        <div class="combo"><svg class="i16"><use href="#pglobe"/></svg><select aria-label="透明度"><option>0</option></select><i class="tri"></i></div>
                        <div class="combo"><svg class="i16"><use href="#pprio"/></svg><select aria-label="优先级" disabled><option>0</option></select><i class="tri dim"></i></div>
                    </div>
                </div>
                <h2>特性</h2>
            </section>

            <section class="group">
                <div class="body">
                    <button class="big"><svg><use href="#explorer"/></svg><span>资源管理器</span></button>
                    <button class="big drop"><svg><use href="#doc"/></svg><span>连接工具</span><i class="tri"></i></button>
                    <div class="stack">
                        <button class="small" title="模型"><svg class="i16"><use href="#cubebox"/></svg><i class="tri"></i></button>
                        <button class="small" title="参考"><svg class="i16"><use href="#docsmall"/></svg><i class="tri"></i></button>
                        <button class="small" title="图层信息"><svg class="i16"><use href="#landinfo"/></svg><i class="tri"></i></button>
                    </div>
                    <div class="stack">
                        <button class="small" title="图层显示"><svg class="i16"><use href="#layers"/></svg><i class="tri"></i></button>
                        <button class="small" title="属性"><svg class="i16"><use href="#info"/></svg></button>
                        <button class="small" title="按键"><svg class="i16"><use href="#keys"/></svg><i class="tri"></i></button>
                    </div>
                    <button class="big flush"><svg><use href="#ball"/></svg><span>弹出设置</span></button>
                </div>
                <h2>基本</h2>
            </section>

            <section class="group">
                <div class="body">
                    <button class="big"><svg><use href="#cursor"/></svg><span>元素选择</span></button>
                    <div class="stack">
                        <button class="small" title="全选"><svg class="i16"><use href="#dots"/></svg></button>
                        <button class="small" title="取消选择"><svg class="i16"><use href="#dotcircle"/></svg></button>
                    </div>
                    <div class="stack">
                        <button class="small" title="锁定"><svg class="i16"><use href="#locksel"/></svg></button>
                        <button class="small" title="解锁"><svg class="i16"><use href="#unlocksel"/></svg></button>
                        <button class="small" title="更改"><svg class="i16"><use href="#sheets"/></svg></button>
                    </div>
                    <button class="big drop hot"><svg><use href="#fence"/></svg><span>围栅工具</span><i class="tri black"></i></button>
                    <div class="stack">
                        <button class="small" title="剪切"><svg class="i16"><use href="#cut"/></svg></button>
                        <button class="small" title="复制"><svg class="i16"><use href="#copypg"/></svg></button>
                        <button class="small" title="粘贴"><svg class="i16"><use href="#paste"/></svg><i class="tri"></i></button>
                    </div>
                </div>
                <h2>选择</h2>
                <div class="tooltip"><b>围栅工具</b><span>放置围栅</span></div>
            </section>

            <section class="group">
                <div class="body">
                    <button class="big"><svg><use href="#smartline"/></svg><span>放置智能线</span></button>
                    <button class="big"><svg><use href="#line"/></svg><span>放置直线</span></button>
                    <button class="big drop"><svg><use href="#arc"/></svg><span>弧工具</span><i class="tri"></i></button>
                    <div class="stack">
                        <button class="small" title="圆"><svg class="i16"><use href="#circle"/></svg><i class="tri"></i></button>
                        <button class="small" title="块"><svg class="i16"><use href="#rect"/></svg><i class="tri"></i></button>
                        <button class="small" title="折线"><svg class="i16"><use href="#poly"/></svg><i class="tri"></i></button>
                    </div>
                    <div class="stack">
                        <button class="small" title="点"><svg class="i16"><use href="#point"/></svg><i class="tri"></i></button>
                        <button class="small" title="多线"><svg class="i16"><use href="#roof"/></svg><i class="tri"></i></button>
                        <button class="small" title="文本"><b class="glyph">A</b><i class="tri"></i></button>
                    </div>
                    <div class="stack">
                        <button class="small" title="单元"><svg class="i16"><use href="#star"/></svg><i class="tri"></i></button>
                    </div>
                </div>
                <h2>放置</h2>
            </section>

            <section class="group">
                <div class="body">
                    <button class="big"><svg><use href="#move"/></svg><span>移动</span></button>
                    <button class="big"><svg><use href="#copy"/></svg><span>复制</span></button>
                    <button class="big"><svg><use href="#rotate"/></svg><span>旋转</span></button>
                    <div class="stack">
                        <button class="small" title="缩放"><svg class="i16"><use href="#stretch"/></svg></button>
                        <button class="small" title="镜像"><svg class="i16"><use href="#mirror"/></svg></button>
                        <button class="small" title="平行移动"><svg class="i16"><use href="#curves"/></svg></button>
                    </div>
                    <div class="stack">
                        <button class="small" title="阵列"><svg class="i16"><use href="#array"/></svg></button>
                        <button class="small" title="拉伸"><svg class="i16"><use href="#offset"/></svg></button>
                        <button class="small" title="对齐"><svg class="i16"><use href="#align"/></svg><i class="tri"></i></button>
                    </div>
                </div>
                <h2>操作</h2>
            </section>

            <section class="group">
                <div class="body">
                    <button class="big"><svg><use href="#modify"/></svg><span>修改元素</span></button>
                    <button class="big"><svg><use href="#break"/></svg><span>中断元素</span></button>
                    <button class="big"><svg><use href="#trim"/></svg><span>修剪多个</span></button>
                    <div class="stack">
                        <button class="small" title="修剪"><svg class="i16"><use href="#xcut"/></svg></button>
                        <button class="small" title="延伸"><svg class="i16"><use href="#extend"/></svg></button>
                        <button class="small" title="圆角"><svg class="i16"><use href="#fillet"/></svg><i class="tri"></i></button>
                    </div>
                    <div class="stack">
                        <button class="small" title="修改弧"><svg class="i16"><use href="#arcmod"/></svg><i class="tri"></i></button>
                        <button class="small" title="更改属性"><svg class="i16"><use href="#palette"/></svg><i class="tri"></i></button>
                        <button class="small" title="删除"><svg class="i16"><use href="#redx"/></svg></button>
                    </div>
                </div>
                <h2>修改</h2>
            </section>

            <section class="group last">
                <div class="body">
                    <button class="big"><svg><use href="#region"/></svg><span>创建区域</span></button>
                    <div class="stack">
                        <button class="small" title="复杂链"><svg class="i16"><use href="#shape1"/></svg></button>
                        <button class="small" title="复杂形"><svg class="i16"><use href="#shape2"/></svg></button>
                        <button class="small" title="组孔"><svg class="i16"><use href="#ring"/></svg></button>
                    </div>
                    <div class="stack">
                        <button class="small" title="组"><svg class="i16"><use href="#group"/></svg><i class="tri dim"></i></button>
                        <button class="small" title="图案"><svg class="i16"><use href="#grid"/></svg><i class="tri"></i></button>
                        <button class="small" title="智能组"><svg class="i16"><use href="#gbulb"/></svg><i class="tri"></i></button>
                    </div>
                </div>
                <h2>组</h2>
                <button class="launcher" title="更多"><svg viewBox="0 0 8 8"><path d="M.5 6V.5H6" fill="none" stroke="#666"/><path d="M7.500 3v4.500H3zM3 3l3 3" fill="#666" stroke="#666" stroke-width=".8"/></svg></button>
            </section>
        </div>

        <div class="viewbar">
            <svg class="i16"><use href="#vcube"/></svg>
            <h2>视图 1 - 顶视图, Default [显示集]</h2>
            <button title="最小化"><svg viewBox="0 0 12 12"><path d="M1.500 6.500h10v3h-10z" fill="#fff" stroke="#555"/></svg></button>
            <button title="还原"><svg viewBox="0 0 12 12"><path d="M4.500 1.500h7v6h-7zM1.500 4.500h6v6h-6zM4 7h1.500v1H4z" fill="#fff" stroke="#444"/></svg></button>
            <button class="close" title="关闭"><svg viewBox="0 0 12 12"><path d="m2 2 8 8m0-8-8 8" stroke="#5a2a26" stroke-width="4"/><path d="m2 2 8 8m0-8-8 8" stroke="#fff" stroke-width="2.500"/></svg></button>
        </div>

        <div class="viewtools">
            <button title="视图属性"><svg class="i16"><use href="#vinfo"/></svg></button><i class="tri black"></i>
            <button title="显示样式"><svg class="i16"><use href="#vstyle"/></svg></button>
            <button title="亮度"><svg class="i16"><use href="#sun"/></svg></button><i class="tri black"></i>
            <button title="必应地图"><svg class="i16"><use href="#bing"/></svg></button><i class="tri black"></i>
            <span class="sep"></span>
            <button title="更新视图"><svg class="i16"><use href="#brush"/></svg></button>
            <button title="放大"><svg class="i16"><use href="#zin"/></svg></button>
            <button title="缩小"><svg class="i16"><use href="#zout"/></svg></button>
            <button title="窗口区域"><svg class="i16"><use href="#zwin"/></svg></button>
            <button title="全景视图"><svg class="i16"><use href="#fit"/></svg></button>
            <button title="旋转视图"><svg class="i16"><use href="#vrot"/></svg></button>
            <button title="平移视图"><svg class="i16"><use href="#hand"/></svg></button>
            <span class="sep"></span>
            <button title="漫游"><svg class="i16"><use href="#feet"/></svg></button>
            <button title="上一视图"><svg class="i16"><use href="#vprev"/></svg></button>
            <button title="下一视图"><svg class="i16"><use href="#vnext"/></svg></button>
            <span class="sep"></span>
            <button title="复制视图"><svg class="i16"><use href="#vcopy"/></svg></button>
            <button title="更改视图透视"><svg class="i16"><use href="#vpersp"/></svg></button>
            <button title="剪切立方体"><svg class="i16"><use href="#vclip"/></svg></button>
            <button title="剪切遮罩"><svg class="i16"><use href="#vmask"/></svg></button>
        </div>

        <main class="canvas">
            <div class="dialog">
                <div class="dlg-title">
                    <svg class="i16"><use href="#wrench"/></svg>
                    <h2>元素选择</h2>
                    <button title="最小化"><svg class="i10" viewBox="0 0 10 10"><path d="M0 5.500h10" stroke="#777"/></svg></button>
                    <button title="最大化" disabled><svg class="i10" viewBox="0 0 10 10"><path d="M.5.5h9v9h-9z" fill="none" stroke="#e4e4e4"/></svg></button>
                    <button title="关闭"><svg class="i10" viewBox="0 0 10 10"><path d="m0 0 10 10M10 0 0 10" stroke="#777"/></svg></button>
                </div>
                <div class="dlg-body">
                    <div class="strip">
                        <button class="on" title="单个"><svg class="i16"><use href="#seltarget"/></svg></button>
                        <button title="块"><svg class="i16"><use href="#drect"/></svg></button>
                        <button title="形"><svg class="i16"><use href="#dpar"/></svg></button>
                        <button title="圆"><svg class="i16"><use href="#dcirc"/></svg></button>
                        <button title="线"><svg class="i16"><use href="#dline"/></svg></button>
                    </div>
                    <button class="side" title="禁用句柄"><svg class="i24"><use href="#deselect"/></svg></button>
                    <span></span>
                    <div class="strip">
                        <button class="on" title="新建"><svg class="i16"><use href="#newsel"/></svg></button>
                        <button title="添加"><svg class="i16"><use href="#plus"/></svg></button>
                        <button title="减去"><svg class="i16"><use href="#minus"/></svg></button>
                        <button title="反选"><svg class="i16"><use href="#invert"/></svg></button>
                        <button title="全选"><svg class="i16"><use href="#dots"/></svg></button>
                    </div>
                    <button class="side" title="选择全部"><svg class="i24"><use href="#selall"/></svg></button>
                    <button class="more" title="展开"><i class="tri black large"></i></button>
                </div>
            </div>
        </main>

        <div class="bottombar">
            <div class="panel views">
                <span class="grip"></span>
                <button title="后退"><svg class="i24"><use href="#back"/></svg></button><i class="tri black"></i>
                <button title="前进"><svg class="i24"><use href="#fwd"/></svg></button><i class="tri"></i>
                <button title="罗盘"><svg class="i24"><use href="#compass"/></svg></button><i class="tri black"></i>
                <div class="viewgroup"><svg class="i16"><use href="#views"/></svg><select aria-label="视图组"><option>Default</option></select><i class="tri black"></i></div>
                <span class="sep"></span>
                <button title="管理视图组"><svg class="i24"><use href="#views"/></svg></button>
                <span class="sep"></span>
                <div class="nums"><button class="on">1</button><button>2</button><button>3</button><button>4</button><button>5</button><button>6</button><button>7</button><button>8</button></div>
            </div>
            <div class="panel coords">
                <span class="grip"></span>
                <label for="cx">X</label><input id="cx" type="text" value="2677.152">
                <span class="sep"></span>
                <label for="cy">Y</label><input id="cy" type="text" value="972.323">
                <span class="sep"></span>
                <label for="cz">Z</label><input id="cz" type="text" value="0.004">
            </div>
        </div>

        <footer class="status">
            <p class="prompt">元素选择 &gt; 标识要添加到集中的元素</p>
            <span class="grip"></span>
            <span class="field message"></span>
            <span class="field blank"></span>
            <span class="field dark snapmode"><svg class="i30"><use href="#snap"/></svg></span>
            <span class="field locks"><svg class="i14"><use href="#lock"/></svg></span>
            <span class="field level-name">BORDER</span>
            <span class="field dark selcount"></span>
            <span class="field dark"></span>
            <span class="field"></span>
            <span class="field"></span>
            <span class="field"><svg class="i16"><use href="#scroll"/></svg></span>
            <span class="field"><svg class="i16"><use href="#wrench"/></svg></span>
            <span class="field"></span>
            <span class="field"><svg class="i16"><use href="#notebook"/></svg></span>
            <span class="field"></span>
            <span class="field"><svg class="i14"><use href="#shield"/></svg></span>
            <span class="field"><svg class="i16"><use href="#globe"/></svg></span>
        </footer>
    </div>
</body>
</html>
```
FILE: styles.css
```css
* {
    box-sizing: border-box;
}

body {
    margin: 0;
    background: #f0f0f0;
    color: #222;
    font: 12px/16px "Noto Sans", "Noto Sans CJK SC", sans-serif;
}

button, select, input {
    font: inherit;
    color: inherit;
}

button {
    padding: 0;
    border: 0;
    background: none;
}

select {
    appearance: none;
    border: 0;
    border-radius: 0;
    background: none;
    padding: 0;
    min-width: 0;
}

h1, h2, p {
    margin: 0;
    font-size: 12px;
    font-weight: normal;
}

svg {
    display: block;
    flex: none;
}

.sprite {
    position: absolute;
    width: 0;
    height: 0;
}

.i10 { width: 10px; height: 10px; }
.i14 { width: 14px; height: 14px; }
.i16 { width: 16px; height: 16px; }
.i20 { width: 20px; height: 20px; }
.i24 { width: 24px; height: 24px; }
.i30 { width: 30px; height: 30px; }

/* drop-down triangle */
.tri {
    flex: none;
    width: 0;
    height: 0;
    border: 3px solid transparent;
    border-top: 4px solid #666;
    border-bottom: 0;
}

.tri.black { border-top-color: #000; }
.tri.dim { border-top-color: #b0b0b0; }

.window {
    display: flex;
    flex-direction: column;
    height: 100vh;
    border: 1px solid #0078d0;
    border-bottom: 0;
}

/* title bar */
.titlebar {
    display: flex;
    align-items: center;
    height: 26px;
    padding: 0 5px 2px 3px;
}

.workflow {
    width: 160px;
    height: 22px;
    margin-left: 7px;
    padding-left: 2px;
    border: 1px solid #c6c6d6;
    background: linear-gradient(#666, #666) no-repeat 148px 8px / 6px 1px, linear-gradient(#666, #666) no-repeat 149px 9px / 4px 1px, linear-gradient(#666, #666) no-repeat 150px 10px / 2px 2px;
}

.quick {
    display: flex;
    align-items: center;
    gap: 6px;
    margin-left: 6px;
}

.quick .tri {
    margin-right: 2px;
    margin-left: -2px;
}

.quick .tri.dim {
    margin: 0 3px 0 0;
}

.v8 {
    width: 15px;
    height: 15px;
    border: 1px solid #008ae0;
    background: #fff;
    color: #008ae0;
    font-size: 11px;
    line-height: 13px;
}

.custom {
    padding-top: 2px;
    margin-left: 4px;
    border-top: 1px solid #000;
}

.quick .custom .tri {
    display: block;
    margin: 0;
}

.caption {
    flex: 1;
    padding-right: 125px;
    font-family: Roboto, "Noto Sans CJK SC", sans-serif;
    text-align: right;
    white-space: nowrap;
}

.search {
    display: flex;
    align-items: center;
    width: 192px;
    height: 22px;
    border: 1px solid #ababab;
    background: #fff;
}

.search input {
    flex: 1;
    min-width: 0;
    height: 20px;
    padding: 0 6px 2px;
    border: 0;
    background: none;
}

.search input::placeholder {
    color: #777;
    font-style: italic;
}

.search button {
    display: flex;
    align-items: center;
    justify-content: center;
    width: 16px;
    height: 20px;
    margin-left: 2px;
    border-left: 1px solid #ccc;
}

.account {
    display: flex;
    align-items: center;
    gap: 5px;
    margin-left: 6px;
}

.help, .user {
    width: 22px;
    height: 22px;
    border: 2px solid #2e96cc;
    border-radius: 50%;
    color: #2e96cc;
    font-size: 16px;
    font-weight: bold;
    line-height: 18px;
}

.user {
    width: 20px;
    height: 20px;
    margin-left: 2px;
    background: #2e96cc;
    color: #fff;
    font-size: 11px;
    font-weight: normal;
    line-height: 16px;
}

.winctl {
    display: flex;
    align-items: center;
    gap: 12px;
    margin-left: 11px;
}

.min {
    width: 10px;
    height: 10px;
    border-bottom: 3px solid #555;
}

.max {
    width: 10px;
    height: 10px;
    border: 1px solid #555;
    border-top-width: 3px;
}

/* ribbon tabs */
.tabs {
    display: flex;
    height: 23px;
    border-bottom: 1px solid #c8c8d4;
}

.file {
    width: 45px;
    background: #007bd0;
    color: #fff;
}

.tab {
    height: 23px;
    margin: 0 1px 0 2px;
    padding: 0 12px;
    border: 1px solid transparent;
    border-bottom: 0;
}

.tab.active {
    border-color: #c8c8d4;
    background: #fafafa;
    color: #0072c6;
}

.collapse {
    margin-left: auto;
    padding: 0 7px;
}

.collapse svg {
    width: 12px;
    height: 7px;
}

/* ribbon */
.ribbon {
    display: flex;
    height: 96px;
    padding: 1px 0;
    border-bottom: 1px solid #33333f;
    background: #fafafa;
}

.group {
    position: relative;
    display: flex;
    flex-direction: column;
    justify-content: space-between;
    padding: 2px 4px 0;
    border-right: 1px solid #c8c8d4;
}

.group h2 {
    text-align: center;
}

.group.last h2 {
    padding-right: 16px;
}

.body {
    display: flex;
}

.attrs {
    width: 352px;
}

.attrs .body {
    flex-direction: column;
    gap: 8px;
    padding: 11px 0 0 1px;
}

.row {
    display: flex;
    align-items: center;
    gap: 4px;
}

.row > svg {
    margin: 0 2px 0 3px;
}

.combo {
    display: flex;
    align-items: center;
    width: 62px;
    height: 21px;
    padding: 0 5px 0 2px;
    border: 1px solid #a9bfe0;
}

.combo svg {
    margin: 0 5px 0 2px;
}

.combo select {
    flex: 1;
    height: 18px;
}

.combo select:disabled {
    color: #999;
    opacity: 1;
}

.combo.wide { width: 72px; }
.combo.template { width: 140px; }
.combo.level { flex: 1; }

.big {
    display: flex;
    flex-direction: column;
    align-items: center;
    height: 73px;
    padding: 4px 3px 0;
}

.big svg {
    width: 32px;
    height: 32px;
}

.big span {
    padding-top: 3px;
    white-space: nowrap;
}

.big.drop {
    height: 72px;
    margin: 0 2px;
}

.big.drop span,
.big.flush span {
    padding-top: 1px;
}

.big .tri {
    margin-top: 2px;
}

.big.hot {
    height: 71px;
    margin-top: 1px;
    padding: 3px 2px 0;
    border: 1px solid #c3dbf5;
    background: linear-gradient(#c9def5 34px, #fcfdff 34px);
}

.big.hot svg {
    height: 31px;
}

.stack {
    display: flex;
    flex-direction: column;
    padding-top: 1px;
}

.small {
    display: flex;
    align-items: center;
    height: 22px;
    padding: 0 3px;
}

.small .tri {
    margin-left: 7px;
}

.glyph {
    width: 16px;
    color: #008ae0;
    font-size: 18px;
    line-height: 22px;
}

.launcher {
    position: absolute;
    right: 5px;
    bottom: 4px;
    width: 8px;
    height: 8px;
}

.tooltip {
    position: absolute;
    z-index: 2;
    left: 104px;
    top: 99px;
    display: flex;
    flex-direction: column;
    gap: 4px;
    width: 210px;
    height: 41px;
    padding: 2px 4px;
    border: 1px solid #c9c9d9;
    background: #f4f4f6;
}

/* view window */
.viewbar {
    display: flex;
    align-items: center;
    gap: 2px;
    height: 30px;
    padding: 6px 2px 0 1px;
    background: linear-gradient(#98b3d2, #b9d1ea);
    color: #000;
}

.viewbar h2 {
    flex: 1;
    padding: 2px 0 0 6px;
}

.viewbar button {
    display: flex;
    align-items: center;
    justify-content: center;
    width: 32px;
    height: 18px;
    border: 1px solid #50637d;
    border-radius: 2px;
    background: linear-gradient(#c5d7ea 50%, #a3bad4 50%);
}

.viewbar button svg {
    width: 12px;
    height: 12px;
}

.viewbar .close {
    border-color: #5a1a18;
    background: linear-gradient(#dc9488 50%, #bd4430 50%);
}

.viewtools {
    display: flex;
    align-items: center;
    gap: 6px;
    height: 24px;
    padding-left: 3px;
    background: #f0f0f0;
}

.viewtools .tri,
.bottombar .tri {
    border-width: 4px 4px 0;
}

.viewtools .tri {
    margin-right: 1px;
}

.sep {
    width: 1px;
    height: 22px;
    background: #a0a0a0;
}

.viewtools .sep {
    margin-right: -1px;
}

.canvas {
    position: relative;
    flex: 1;
    margin-right: 1px;
    background: #000;
}

/* tool settings */
.dialog {
    position: absolute;
    left: 16px;
    top: 10px;
    width: 228px;
    border: 1px solid #444;
    background: #f0f0f0;
}

.dlg-title {
    display: flex;
    align-items: center;
    gap: 35px;
    height: 30px;
    padding: 0 18px 0 8px;
    background: #fff;
    color: #999;
}

.dlg-title h2 {
    flex: 1;
    margin: 0 -16px 0 -31px;
    white-space: nowrap;
}

.dlg-body {
    display: grid;
    grid-template-columns: 110px 24px 1fr;
    gap: 16px 24px;
    align-items: center;
    padding: 14px 11px 12px 13px;
}

.strip {
    display: flex;
    gap: 1px;
    height: 26px;
    padding: 2px;
    border: 1px solid #fff;
    border-top-color: #999;
    border-left-color: #999;
}

.strip button {
    width: 20px;
    height: 20px;
    padding: 2px;
}

.strip .on {
    padding: 1px;
    border: 1px solid #2a70c0;
    background: #7db3e2;
}

.more {
    justify-self: center;
    padding: 12px 0 0 4px;
}

.tri.large {
    display: block;
    border-width: 5px 5px 0;
}

/* bottom tool bar */
.bottombar {
    display: flex;
    gap: 3px;
    height: 34px;
    margin-right: 1px;
    background: #d6d6d6;
}

.panel {
    display: flex;
    align-items: center;
    gap: 6px;
    padding: 1px 3px 0 1px;
    background: #f0f0f0;
}

.grip {
    width: 2px;
    height: 20px;
    background: repeating-linear-gradient(#aaa 0 2px, transparent 2px 4px);
}

.panel .tri {
    margin-right: -1px;
}

.views .sep {
    height: 26px;
    margin: 0 -2px;
}

.viewgroup {
    display: flex;
    align-items: center;
    gap: 6px;
    width: 168px;
    height: 23px;
    margin-left: -1px;
    padding: 0 5px 0 2px;
    border: 1px solid #adadad;
    background: #e1e1e1;
    color: #000;
}

.viewgroup select {
    flex: 1;
}

.nums {
    display: flex;
    height: 23px;
    border: 1px solid #999;
}

.nums button {
    width: 18px;
    padding-top: 2px;
    border-right: 1px solid #000;
    border-left: 1px solid #fff;
    color: #000;
}

.nums button:first-child {
    width: 16px;
}

.nums button:last-child {
    border-right: 0;
}

.nums .on {
    border: 1px solid #2a62c0;
    background: #7db3e2;
}

.coords {
    gap: 5px;
    padding: 1px 1px 0 2px;
}

.coords label {
    width: 14px;
    color: #000;
    font-size: 16px;
    font-weight: bold;
    text-align: center;
}

.coords input {
    width: 119px;
    height: 21px;
    padding: 0 5px;
    border: 1px solid #ababb3;
    background: #fff;
    color: #777;
}

.coords .sep {
    height: 34px;
    margin: 0 1px 0 -1px;
}

/* status bar */
.status {
    display: flex;
    align-items: center;
    height: 32px;
    padding: 1px 3px 0 0;
    color: #000;
}

.prompt {
    width: 329px;
    padding: 2px 0 0 2px;
}

.field {
    display: flex;
    align-items: center;
    justify-content: center;
    width: 34px;
    height: 26px;
    border-left: 1px solid #dedede;
}

.field.message {
    width: 33px;
    height: 32px;
    margin-left: 2px;
    border-color: #aaa;
}

.field.blank {
    flex: 1;
    border-color: #666;
}

.field.dark {
    border-color: #666;
}

.field.level-name {
    justify-content: flex-start;
    width: 149px;
    padding-left: 3px;
}

.field.selcount {
    width: 133px;
}
```
